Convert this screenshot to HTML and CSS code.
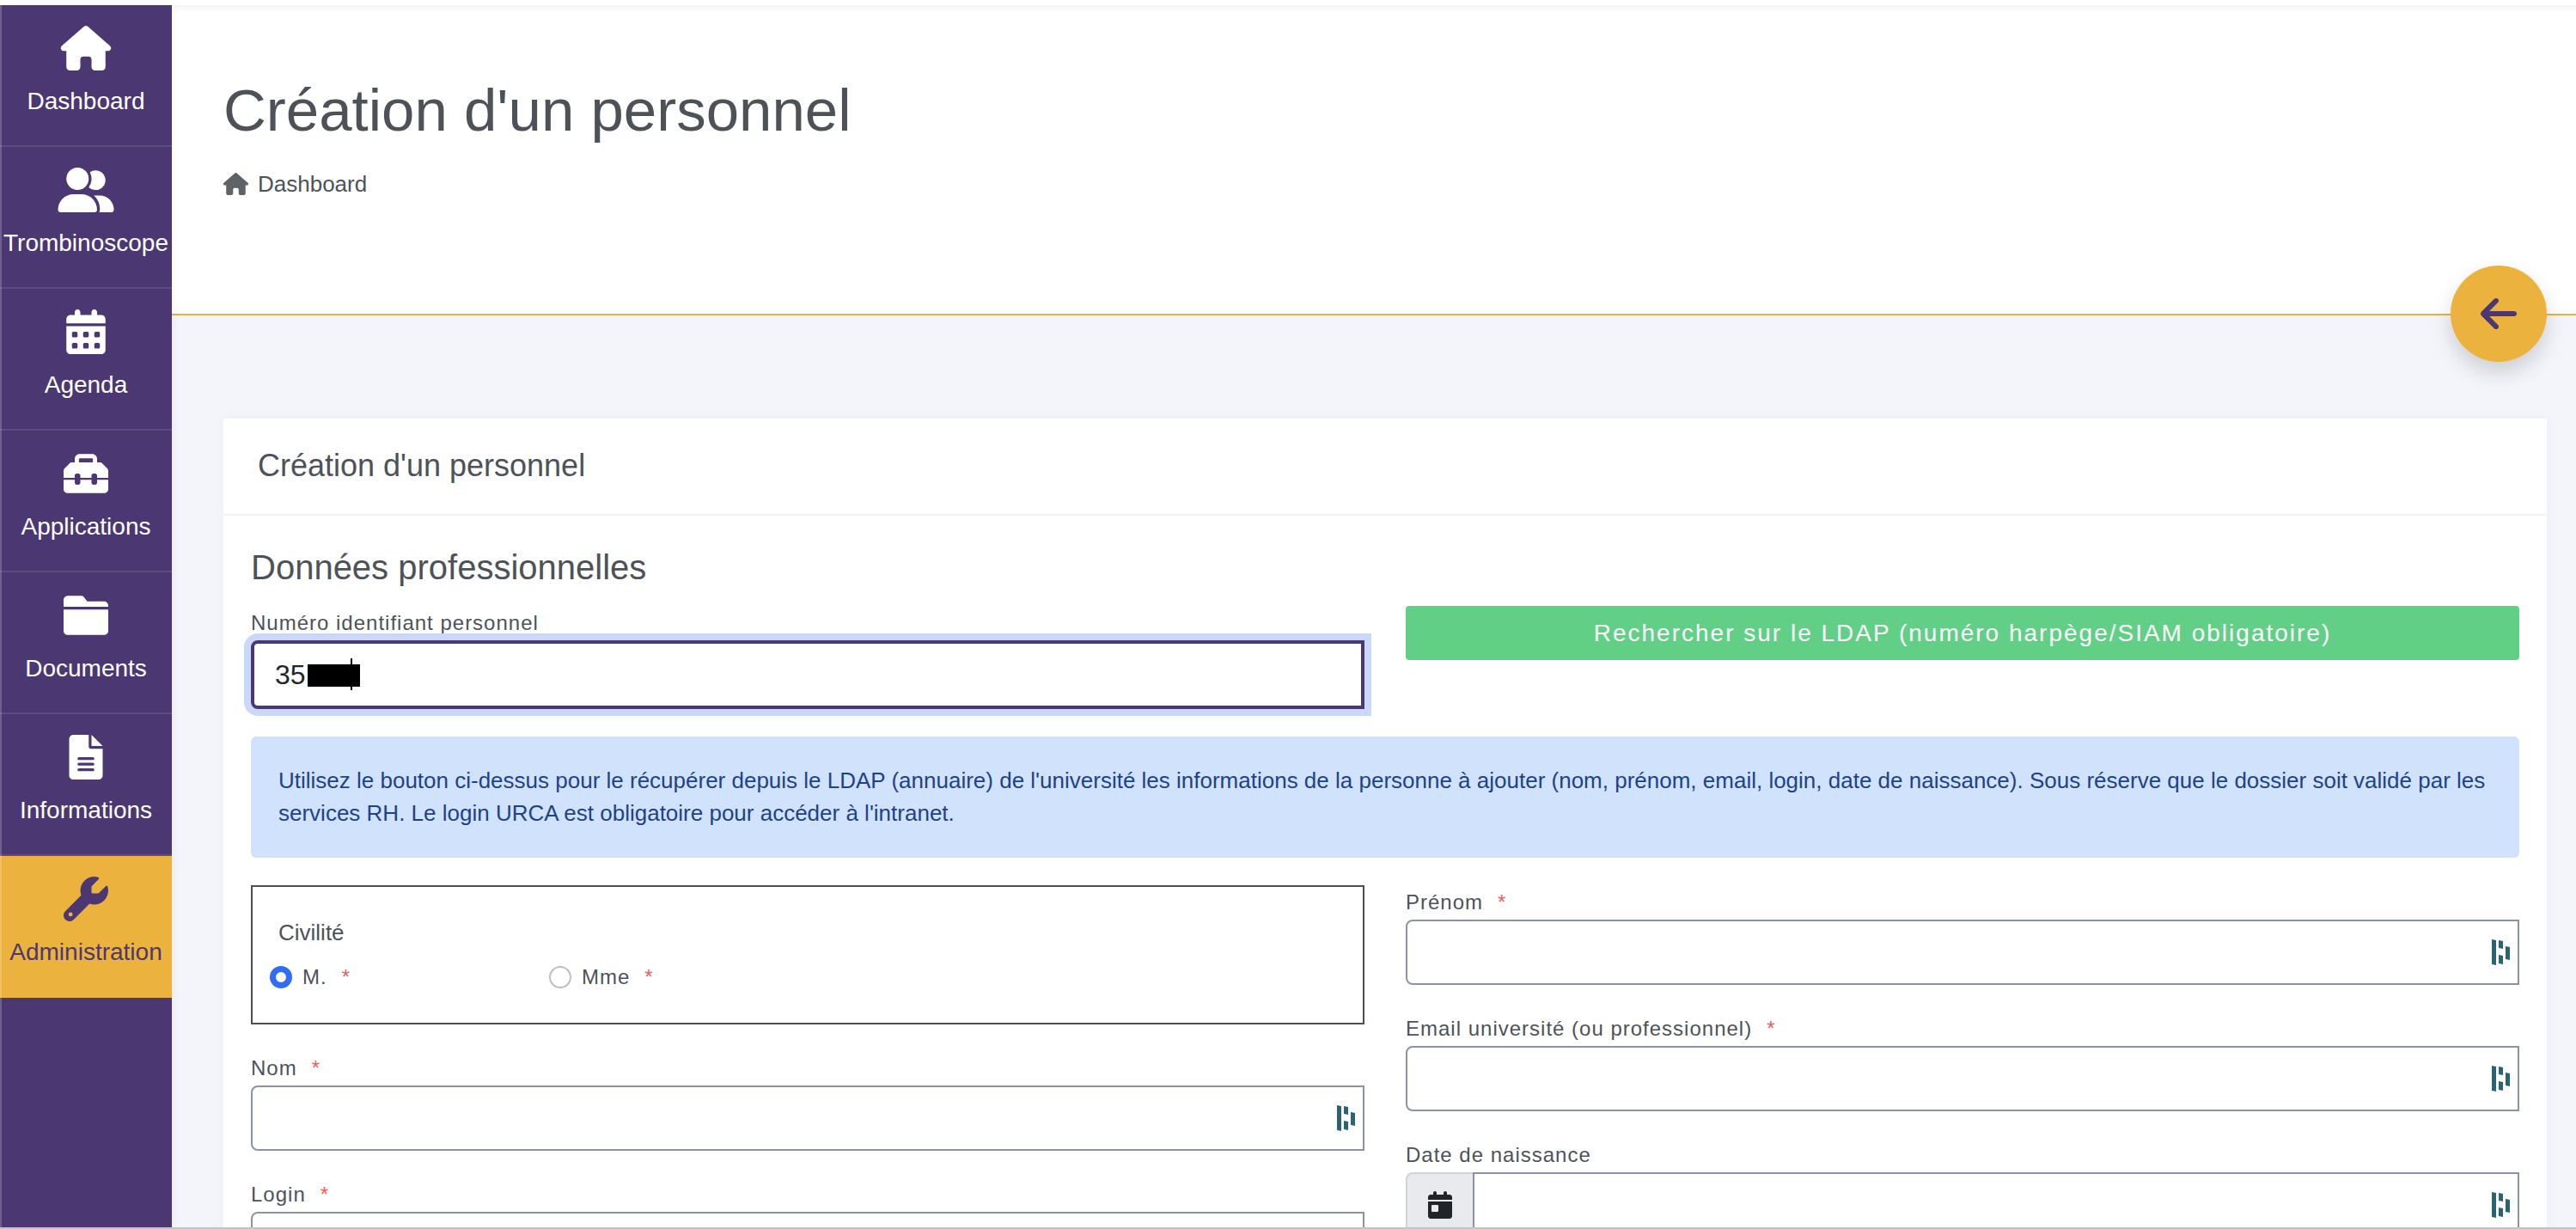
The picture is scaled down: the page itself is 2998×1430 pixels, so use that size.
FILE: index.html
```html
<!DOCTYPE html>
<html lang="fr">
<head>
  <meta charset="utf-8">
  <meta name="viewport" content="width=device-width, initial-scale=1">
  <title>Création d'un personnel</title>
  <link rel="stylesheet" href="styles.css">
</head>
<body>
<svg class="sprite" aria-hidden="true">
  <symbol id="i-house" viewBox="0 0 576 512"><path d="M575.8 255.5c0 18-15 32.1-32 32.1h-32l.7 160.2c0 2.700-.2 5.400-.5 8.100V472c0 22.100-17.900 40-40 40H456c-1.100 0-2.200 0-3.300-.1c-1.400 .1-2.800 .1-4.200 .1H392c-22.100 0-40-17.900-40-40V384c0-17.700-14.300-32-32-32H256c-17.700 0-32 14.300-32 32v88c0 22.100-17.900 40-40 40H104c-22.100 0-40-17.900-40-40V287.600H32c-18 0-32-14-32-32.100c0-9 3-17 10-24L266.400 8c7-7 15-8 22-8s15 2 21 7L564.800 231.500c8 7 12 15 11 24z"/></symbol>
  <symbol id="i-group" viewBox="0 0 640 512"><path d="M96 128a128 128 0 1 1 256 0A128 128 0 1 1 96 128zM0 482.300C0 383.800 79.800 304 178.300 304h91.400C368.200 304 448 383.800 448 482.300c0 16.400-13.300 29.700-29.700 29.700H29.700C13.300 512 0 498.700 0 482.300zM609.300 512H471.400c5.400-9.400 8.600-20.300 8.600-32v-8c0-60.700-27.100-115.200-69.800-151.800c2.400-.1 4.700-.2 7.100-.2h61.400C567.800 320 640 392.200 640 481.300c0 17-13.800 30.700-30.700 30.700zM432 256c-31 0-59-12.600-79.300-32.900C372.400 196.500 384 163.600 384 128c0-26.800-6.600-52.100-18.300-74.300C384.300 40.100 407.200 32 432 32c61.900 0 112 50.100 112 112s-50.100 112-112 112z"/></symbol>
  <symbol id="i-calendar" viewBox="0 0 448 512"><path d="M128 0c17.700 0 32 14.300 32 32V64H288V32c0-17.700 14.300-32 32-32s32 14.300 32 32V64h48c26.500 0 48 21.500 48 48v48H0V112C0 85.500 21.500 64 48 64H96V32c0-17.700 14.300-32 32-32zM0 192H448V464c0 26.500-21.500 48-48 48H48c-26.500 0-48-21.500-48-48V192zm64 80v32c0 8.800 7.200 16 16 16h32c8.800 0 16-7.200 16-16V272c0-8.800-7.200-16-16-16H80c-8.800 0-16 7.200-16 16zm128 0v32c0 8.800 7.200 16 16 16h32c8.800 0 16-7.200 16-16V272c0-8.800-7.200-16-16-16H208c-8.800 0-16 7.200-16 16zm144-16c-8.800 0-16 7.200-16 16v32c0 8.800 7.200 16 16 16h32c8.800 0 16-7.200 16-16V272c0-8.800-7.200-16-16-16H336zM64 400v32c0 8.800 7.200 16 16 16h32c8.800 0 16-7.200 16-16V400c0-8.800-7.200-16-16-16H80c-8.800 0-16 7.200-16 16zm144-16c-8.800 0-16 7.200-16 16v32c0 8.800 7.200 16 16 16h32c8.800 0 16-7.200 16-16V400c0-8.800-7.200-16-16-16H208zm112 16v32c0 8.800 7.200 16 16 16h32c8.800 0 16-7.200 16-16V400c0-8.800-7.200-16-16-16H336c-8.800 0-16 7.200-16 16z"/></symbol>
  <symbol id="i-toolbox" viewBox="0 0 512 512"><path d="M176 88v40H336V88c0-4.400-3.600-8-8-8H184c-4.400 0-8 3.600-8 8zm-48 40V88c0-30.900 25.100-56 56-56H328c30.900 0 56 25.100 56 56v40h28.100c12.700 0 24.900 5.100 33.900 14.100l51.900 51.900c9 9 14.100 21.200 14.100 33.900V304H384V278c0-12-10-22-22-22h-20c-12 0-22 10-22 22v26H192V278c0-12-10-22-22-22h-20c-12 0-22 10-22 22v26H0V227.900c0-12.700 5.100-24.900 14.100-33.900l51.900-51.900c9-9 21.200-14.100 33.900-14.100H128zM0 432V328H128v34c0 12 10 22 22 22h20c12 0 22-10 22-22V328H320v34c0 12 10 22 22 22h20c12 0 22-10 22-22V328H512V432c0 26.500-21.500 48-48 48H48c-26.500 0-48-21.500-48-48z"/></symbol>
  <symbol id="i-folder" viewBox="0 0 512 512"><path d="M464 480H48c-26.500 0-48-21.500-48-48V190H512V432c0 26.500-21.500 48-48 48zM512 158H0V80C0 53.500 21.500 32 48 32H206c9 0 17 4 23 10L270 96H464c26.500 0 48 21.500 48 48z"/></symbol>
  <symbol id="i-file" viewBox="0 0 384 512"><path d="M48 0C21.500 0 0 21.500 0 48V464c0 26.500 21.500 48 48 48H336c26.500 0 48-21.500 48-48V160H248c-13 0-24-11-24-24V0H48zM256 0V128H384L256 0zM112 256H272c8.800 0 16 7.200 16 16s-7.200 16-16 16H112c-8.800 0-16-7.200-16-16s7.200-16 16-16zm0 64H272c8.800 0 16 7.200 16 16s-7.200 16-16 16H112c-8.800 0-16-7.200-16-16s7.200-16 16-16zm0 64H272c8.800 0 16 7.200 16 16s-7.200 16-16 16H112c-8.800 0-16-7.200-16-16s7.200-16 16-16z"/></symbol>
  <symbol id="i-wrench" viewBox="0 0 512 512"><path d="M352 320c88.400 0 160-71.600 160-160c0-15.300-2.200-30.100-6.200-44.200c-3.100-10.800-16.400-13.200-24.300-5.300l-76.800 76.800c-3 3-7.100 4.700-11.300 4.700H336c-8.800 0-16-7.200-16-16V118.600c0-4.200 1.700-8.300 4.700-11.300l76.800-76.800c7.900-7.900 5.400-21.200-5.300-24.300C382.100 2.200 367.300 0 352 0C263.600 0 192 71.600 192 160c0 19.100 3.400 37.500 9.500 54.500L19.900 396.100C7.200 408.800 0 426.100 0 444.100C0 481.600 30.400 512 67.900 512c18 0 35.300-7.200 48-19.900L297.500 310.500c17 6.200 35.400 9.500 54.500 9.500zM80 408a24 24 0 1 1 0 48 24 24 0 1 1 0-48z"/></symbol>
  <symbol id="i-arrow" viewBox="0 0 448 512"><path d="M9.400 233.400c-12.500 12.500-12.500 32.800 0 45.300l160 160c12.500 12.500 32.800 12.500 45.300 0s12.500-32.800 0-45.300L109.200 288 416 288c17.700 0 32-14.300 32-32s-14.300-32-32-32l-306.700 0L214.600 118.600c12.500-12.500 12.500-32.800 0-45.300s-32.800-12.500-45.300 0l-160 160z"/></symbol>
  <symbol id="i-day" viewBox="0 0 448 512"><path d="M128 0c17.700 0 32 14.300 32 32V64H288V32c0-17.700 14.300-32 32-32s32 14.300 32 32V64h48c26.500 0 48 21.500 48 48v48H0V112C0 85.500 21.500 64 48 64H96V32c0-17.700 14.300-32 32-32zM0 192H448V464c0 26.500-21.500 48-48 48H48c-26.500 0-48-21.500-48-48V192zm80 64c-8.800 0-16 7.200-16 16v96c0 8.800 7.200 16 16 16h96c8.800 0 16-7.200 16-16V272c0-8.800-7.200-16-16-16H80z"/></symbol>
  <symbol id="i-vault" viewBox="0 0 21 30"><path d="M0 0l5 1v29l-5-1zM8 1l5 1v9l-5-1zM8 18l5 1v10l-5-1zM16 8l5 1v15l-5-1z"/></symbol>
</svg>

<div class="shell">
  <div class="topbar"></div>
  <div class="layout">
    <nav class="sidebar" aria-label="Navigation principale">
      <a class="nav-item" href="#"><svg class="nav-icon"><use href="#i-house"/></svg><span>Dashboard</span></a>
      <a class="nav-item" href="#"><svg class="nav-icon"><use href="#i-group"/></svg><span>Trombinoscope</span></a>
      <a class="nav-item" href="#"><svg class="nav-icon"><use href="#i-calendar"/></svg><span>Agenda</span></a>
      <a class="nav-item" href="#"><svg class="nav-icon"><use href="#i-toolbox"/></svg><span>Applications</span></a>
      <a class="nav-item" href="#"><svg class="nav-icon"><use href="#i-folder"/></svg><span>Documents</span></a>
      <a class="nav-item" href="#"><svg class="nav-icon"><use href="#i-file"/></svg><span>Informations</span></a>
      <a class="nav-item nav-item-active" href="#"><svg class="nav-icon"><use href="#i-wrench"/></svg><span>Administration</span></a>
    </nav>

    <main class="main">
      <header class="page-header">
        <h1 class="page-title">Création d'un personnel</h1>
        <a class="breadcrumb" href="#"><svg class="breadcrumb-icon" aria-hidden="true"><use href="#i-house"/></svg>Dashboard</a>
        <button class="back-button" type="button" aria-label="Retour"><svg class="back-icon"><use href="#i-arrow"/></svg></button>
      </header>

      <div class="content">
        <section class="card">
          <h2 class="card-title">Création d'un personnel</h2>
          <form class="card-body">
            <h3 class="section-title">Données professionnelles</h3>

            <div class="columns">
              <div class="field">
                <label class="label" for="numero">Numéro identifiant personnel</label>
                <div class="control">
                  <input class="input input-focused" id="numero" type="text" value="35">
                  <span class="mask"></span>
                  <span class="caret"></span>
                </div>
              </div>
              <button class="search-button" type="button">Rechercher sur le LDAP (numéro harpège/SIAM obligatoire)</button>
            </div>

            <p class="alert">Utilisez le bouton ci-dessus pour le récupérer depuis le LDAP (annuaire) de l'université les informations de la personne à ajouter (nom, prénom, email, login, date de naissance). Sous réserve que le dossier soit validé par les services RH. Le login URCA est obligatoire pour accéder à l'intranet.</p>

            <div class="columns">
              <div class="stack">
                <fieldset class="civility">
                  <legend class="legend">Civilité</legend>
                  <div class="options">
                    <label class="option"><input class="radio" type="radio" name="civilite" checked>M.<span class="star">*</span></label>
                    <label class="option"><input class="radio" type="radio" name="civilite">Mme<span class="star">*</span></label>
                  </div>
                </fieldset>
                <div class="field">
                  <label class="label" for="nom">Nom<span class="star">*</span></label>
                  <div class="control"><input class="input" id="nom" type="text"><svg class="vault"><use href="#i-vault"/></svg></div>
                </div>
                <div class="field">
                  <label class="label" for="login">Login<span class="star">*</span></label>
                  <div class="control"><input class="input" id="login" type="text"></div>
                </div>
              </div>
              <div class="stack">
                <div class="field">
                  <label class="label" for="prenom">Prénom<span class="star">*</span></label>
                  <div class="control"><input class="input" id="prenom" type="text"><svg class="vault"><use href="#i-vault"/></svg></div>
                </div>
                <div class="field">
                  <label class="label" for="email">Email université (ou professionnel)<span class="star">*</span></label>
                  <div class="control"><input class="input" id="email" type="email"><svg class="vault"><use href="#i-vault"/></svg></div>
                </div>
                <div class="field">
                  <label class="label" for="naissance">Date de naissance</label>
                  <div class="control">
                    <span class="addon"><svg class="addon-icon"><use href="#i-day"/></svg></span>
                    <input class="input input-grouped" id="naissance" type="text"><svg class="vault"><use href="#i-vault"/></svg>
                  </div>
                </div>
              </div>
            </div>
          </form>
        </section>
      </div>
    </main>
  </div>
</div>
</body>
</html>
```

FILE: styles.css
```css
:root {
  --purple: #4b3872;
  --gold: #ebb33d;
  --text: #4d5259;
  --line: #8b93a5;
  --page: #f4f5fa;
}

* {
  box-sizing: border-box;
}

body {
  margin: 0;
  background: var(--page);
  color: var(--text);
  font-family: "Liberation Sans", Arial, sans-serif;
  font-size: 26px;
}

a {
  text-decoration: none;
}

svg {
  display: block;
  fill: currentColor;
}

.sprite {
  display: none;
}

.shell {
  display: flex;
  flex-direction: column;
  height: 100vh;
  overflow: hidden;
  border-bottom: 2px solid #c4c4c4;
}

.topbar {
  flex: none;
  height: 6px;
  background: #fff;
}

.layout {
  display: flex;
  flex: 1;
  min-height: 0;
}

/* Sidebar */

.sidebar {
  z-index: 1;
  flex: none;
  width: 200px;
  background: var(--purple);
  box-shadow: inset 2px 0 rgba(255, 255, 255, 0.2), 0 0 12px rgba(0, 0, 0, 0.05);
}

.nav-item {
  display: flex;
  flex-direction: column;
  align-items: center;
  gap: 16px;
  height: 165px;
  padding-top: 24px;
  border-bottom: 2px solid rgba(255, 255, 255, 0.1);
  color: #fff;
  font-size: 28px;
  line-height: 40px;
}

.nav-item-active {
  border-bottom: 0;
  background: var(--gold);
  box-shadow: inset 2px 0 rgba(255, 255, 255, 0.2);
  color: var(--purple);
}

.nav-icon {
  width: 66px;
  height: 52px;
}

/* Page header */

.main {
  flex: 1;
  min-width: 0;
  overflow: hidden;
}

.page-header {
  position: relative;
  padding: 82px 60px 131px;
  border-bottom: 2px solid var(--gold);
  background: #fff;
  box-shadow: inset 0 10px 8px -8px rgba(0, 0, 0, 0.06);
}

.page-title {
  margin: 0 0 24px;
  font-size: 69px;
  font-weight: 400;
  line-height: 82px;
}

.breadcrumb {
  display: flex;
  align-items: center;
  gap: 11px;
  color: var(--text);
  line-height: 40px;
}

.breadcrumb-icon {
  width: 29px;
  height: 26px;
  color: #5f6368;
}

.back-button {
  position: absolute;
  right: 34px;
  bottom: -56px;
  display: grid;
  place-items: center;
  width: 112px;
  height: 112px;
  padding: 0;
  border: 0;
  border-radius: 50%;
  background: var(--gold);
  box-shadow: 0 12px 24px rgba(0, 0, 0, 0.16);
  color: var(--purple);
}

.back-icon {
  width: 42px;
  height: 48px;
}

/* Card */

.content {
  padding: 120px 34px 60px 60px;
}

.card {
  background: #fff;
  box-shadow: 0 0 10px rgba(75, 56, 114, 0.04);
}

.card-title {
  margin: 0;
  padding: 28px 40px 29px;
  border-bottom: 2px solid #f1f2f3;
  font-size: 36px;
  font-weight: 400;
  line-height: 54px;
}

.card-body {
  padding: 36px 32px;
}

.section-title {
  margin: 0 0 21px;
  font-size: 40px;
  font-weight: 400;
  line-height: 48px;
}

.columns {
  display: grid;
  grid-template-columns: 1fr 1fr;
  gap: 48px;
  align-items: start;
}

.stack {
  display: flex;
  flex-direction: column;
  gap: 31px;
}

.label {
  display: block;
  font-size: 24px;
  letter-spacing: 1px;
  line-height: 40px;
}

.star {
  margin-left: 17px;
  color: #e9605c;
}

.control {
  position: relative;
  display: flex;
}

.input {
  flex: 1;
  min-width: 0;
  height: 76px;
  padding: 0 48px 0 24px;
  border: 2px solid var(--line);
  border-radius: 8px 0 0 8px;
  outline: 0;
  background: #fff;
  color: #212529;
  font: 32px "Liberation Sans", Arial, sans-serif;
}

.input-focused {
  height: 80px;
  border: 4px solid var(--purple);
  box-shadow: 0 0 0 8px #cad8fb;
}

.input-grouped {
  border-radius: 0;
}

.mask {
  position: absolute;
  top: 28px;
  left: 66px;
  width: 61px;
  height: 26px;
  background: #000;
}

.caret {
  position: absolute;
  top: 21px;
  left: 116px;
  width: 2px;
  height: 37px;
  background: #000;
}

.vault {
  position: absolute;
  top: 23px;
  right: 11px;
  width: 21px;
  height: 30px;
  color: #2b6374;
}

.addon {
  display: grid;
  place-items: center;
  width: 78px;
  border: 2px solid #ced4da;
  border-right: 0;
  border-radius: 8px 0 0 8px;
  background: #e9eaee;
  color: #212529;
}

.addon-icon {
  width: 28px;
  height: 32px;
}

.search-button {
  height: 63px;
  padding: 0 24px;
  border: 0;
  border-radius: 4px;
  background: #61d086;
  color: #fff;
  font: 28px "Liberation Sans", Arial, sans-serif;
  letter-spacing: 2px;
}

.alert {
  margin: 32px 0;
  padding: 32px 32px 33px;
  border-radius: 6px;
  background: #d1e3fc;
  color: #1d4289;
  line-height: 38px;
}

.civility {
  min-width: 0;
  margin: 0;
  padding: 34px 20px 35px;
  border: 2px solid #4b4f56;
}

.legend {
  float: left;
  width: 100%;
  margin-bottom: 15px;
  padding: 0 10px;
  line-height: 38px;
}

.options {
  display: flex;
  clear: both;
}

.option {
  display: flex;
  flex: 0 0 325px;
  align-items: center;
  font-size: 24px;
  letter-spacing: 1px;
  line-height: 36px;
}

.radio {
  appearance: none;
  width: 26px;
  height: 26px;
  margin: 0 12px 0 0;
  border: 2px solid #bfbfbf;
  border-radius: 50%;
  background: #fff;
}

.radio:checked {
  border: 7px solid #2f6df6;
}
```
